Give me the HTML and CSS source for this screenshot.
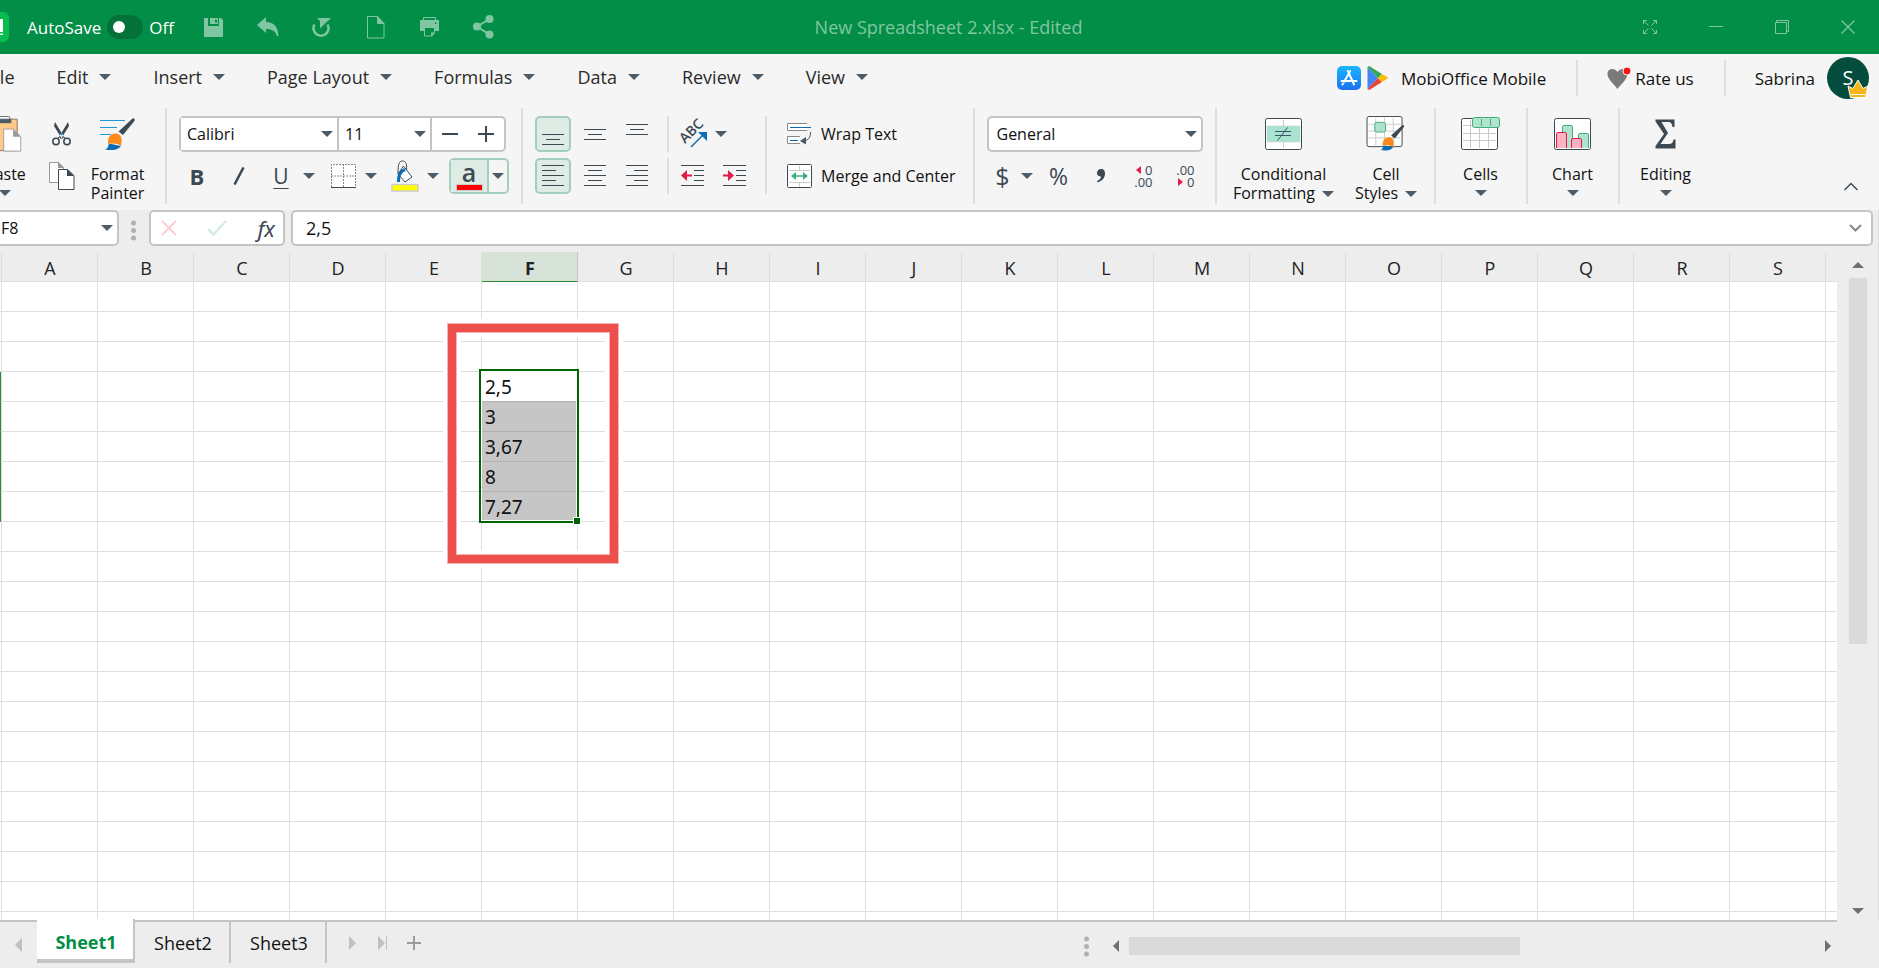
FILE: index.html
```html
<!DOCTYPE html>
<html lang="en">

<head>
    <meta charset="utf-8">
    <title>New Spreadsheet 2.xlsx - Edited</title>
    <link rel="stylesheet" href="styles.css">
</head>

<body>
    <svg class="defs" aria-hidden="true">
        <symbol id="caret" viewBox="0 0 12 6"><path d="M0 0h12L6 6z" /></symbol>
        <symbol id="brush" viewBox="0 0 30 34">
            <path d="M29 0.5c1 1 .8 1.800 0 3L18 17l-4.500-3.500L27 1c.8-.7 1.500-.9 2-.5z" fill="#3c4852" />
            <path d="M0 31.500c3.500-1 3-3.500 4-6L16 28c-2 3-6 5-16 3.500z" fill="#0a6cb5" />
            <path d="M3 26c-.5-6 2-10.500 7.500-10.500 5 0 7.500 4 5.500 12.500-3-2.500-9-3-13-2z" fill="#ff8a1c" />
        </symbol>
    </svg>

    <!-- TITLE BAR -->
    <header class="titlebar">
        <div class="title-left">
            <svg class="app-logo" width="30" height="30" viewBox="0 0 30 30"><rect width="30" height="30" rx="6" fill="#07bd4f" /><path fill="#fff" d="M6 7h18v13H6zM6 21.500h18V23H6z" /><path fill="#07bd4f" d="M9 10h11v7H9z" /></svg>
            <label class="autosave"><span>AutoSave</span><input type="checkbox" class="switch"><span>Off</span></label>
            <button class="title-btn" aria-label="Save"><svg width="19" height="19" viewBox="0 0 19 19"><path fill="currentColor" fill-rule="evenodd" d="M0 0h4v8h11V0h2l2 2v17H0zM6 0h8v6H6zM11 1.500h2v3h-2z" /></svg></button>
            <button class="title-btn" aria-label="Undo"><svg width="22" height="20" viewBox="0 0 22 20"><path fill="currentColor" d="M0 8L9 0v5c8 0 12 5 12.500 14h-1.500c-1.500-5-5-7-11-7v4z" /></svg></button>
            <button class="title-btn" aria-label="Redo"><svg width="20" height="20" viewBox="0 0 20 20"><path fill="none" stroke="currentColor" stroke-width="2.500" d="M2.500 7.500A7.500 7.500 0 1 0 15.500 7.500" /><path fill="currentColor" d="M5 1h14l-2.500 2.500-3 2.500L8 11.500V4z" /></svg></button>
            <button class="title-btn" aria-label="New"><svg width="18" height="23" viewBox="0 0 18 23"><path fill="none" stroke="currentColor" d="M.5.5h10l6.500 7v14.500H.5zM10.500.5v7H17" /><path fill="currentColor" d="M10.500.5L17 7.500h-6.500z" /></svg></button>
            <button class="title-btn" aria-label="Print"><svg width="20" height="20" viewBox="0 0 20 20"><path fill="none" stroke="currentColor" d="M3.500 3.500v-3h12v3" /><path fill="currentColor" fill-rule="evenodd" d="M0 3h19v11h-4v-3H4v3H0zM15 5.500h1.500V7H15z" /><path fill="none" stroke="currentColor" d="M4.500 11v8H12l2.500-3v-5" /><path fill="currentColor" d="M11 19v-3.500h4z" /></svg></button>
            <button class="title-btn" aria-label="Share"><svg width="21" height="24" viewBox="0 0 21 24"><path stroke="currentColor" stroke-width="2" fill="none" d="M17 4L4 11.500 17 20" /><g fill="currentColor"><circle cx="16.500" cy="4" r="4" /><circle cx="4" cy="11.500" r="4" /><circle cx="16.500" cy="19.500" r="4" /></g></svg></button>
        </div>
        <h1 class="doc-title">New Spreadsheet 2.xlsx - Edited</h1>
        <div class="title-right">
            <button class="win-btn" aria-label="Full screen"><svg width="14" height="14" viewBox="0 0 14 14"><path fill="none" stroke="currentColor" d="M.5 4V.5H4M.5.5l5 5M10 .5h3.500V4M13.500.5l-5 5M.5 10v3.500H4M.5 13.500l5-5M13.500 10v3.500H10M13.500 13.500l-5-5" /></svg></button>
            <button class="win-btn" aria-label="Minimize"><svg width="14" height="14" viewBox="0 0 14 14"><path stroke="currentColor" d="M0 6.500h14" /></svg></button>
            <button class="win-btn" aria-label="Restore"><svg width="14" height="14" viewBox="0 0 14 14"><path fill="none" stroke="currentColor" d="M.5 2.500h11v11H.5zM1.500 2.500v-2h12v11h-2" /></svg></button>
            <button class="win-btn" aria-label="Close"><svg width="14" height="14" viewBox="0 0 14 14"><path stroke="currentColor" stroke-width="1.300" d="M.5.5l13 13M13.500.5l-13 13" /></svg></button>
        </div>
    </header>

    <!-- MENU -->
    <div class="menubar">
        <nav class="menu">
            <button>File</button>
            <button>Edit <svg class="caret"><use href="#caret" /></svg></button>
            <button>Insert <svg class="caret"><use href="#caret" /></svg></button>
            <button>Page Layout <svg class="caret"><use href="#caret" /></svg></button>
            <button>Formulas <svg class="caret"><use href="#caret" /></svg></button>
            <button>Data <svg class="caret"><use href="#caret" /></svg></button>
            <button>Review <svg class="caret"><use href="#caret" /></svg></button>
            <button>View <svg class="caret"><use href="#caret" /></svg></button>
        </nav>
        <div class="account">
            <a href="#" class="mobile-link">
                <svg width="24" height="24" viewBox="0 0 24 24"><defs><linearGradient id="store" x1="0" y1="0" x2="0" y2="1"><stop offset="0" stop-color="#1ab8fb" /><stop offset="1" stop-color="#1d70f2" /></linearGradient></defs><rect width="24" height="24" rx="5" fill="url(#store)" /><path fill="none" stroke="#fff" stroke-width="2" stroke-linecap="round" d="M13.200 5L7 16M10.800 5L17 18.500M4.500 15h9M16.500 15h3M5.500 18.500l.3-.6" /></svg>
                <svg width="22" height="24" viewBox="0 0 22 24"><path fill="#4285f4" d="M.5 1v22L11 12z" /><path fill="#34a853" d="M.5 1C1 0 2 0 3 .5l12 7.500-4 4z" /><path fill="#ea4335" d="M.5 23c.5 1 1.500 1 2.500.5L15 16l-4-4z" /><path fill="#fbbc04" d="M15 8l5 3c1 .6 1 1.400 0 2l-5 3-4-4z" /></svg>
                <span>MobiOffice Mobile</span>
            </a>
            <a href="#" class="rate-link">
                <svg width="24" height="24" viewBox="0 0 24 24"><path fill="#7a7a7a" d="M10.500 23C6 17 .5 13 .5 8 .5 2 7.500 1.500 10.500 6c3-4.500 10-4 10 2 0 5-5.500 9-10 15z" /><circle cx="20" cy="5" r="4" fill="#f11" stroke="#f4f4f4" /></svg>
                <span>Rate us</span>
            </a>
            <a href="#" class="user-link">
                <span>Sabrina</span>
                <span class="avatar">S<svg class="crown" width="22" height="19" viewBox="0 0 22 19"><path fill="#f5b515" stroke="#fff" d="M3.500 18.500L1 7l5 2.500L11 1l5 8.500L21 7l-2.500 11.500z" /><path stroke="#fff" d="M4 15.500h14" /></svg></span>
            </a>
        </div>
    </div>

    <!-- RIBBON -->
    <div class="ribbon">
        <div class="group clipboard">
            <button class="big paste">
                <svg width="44" height="40" viewBox="0 0 44 40"><path fill="#ffc98a" stroke="#8a6a45" d="M.5 3.500h35v35H.5z" /><path fill="#4d5b67" d="M9 3h20v5H9z" /><rect x="13" y=".5" width="14" height="3" rx="1" fill="#fff" stroke="#4d5b67" /><path fill="#fff" stroke="#999" d="M20.500 14.500h11l8 8.500v16h-19z" /><path fill="#999" d="M31 14.500v8.500h8.500z" /></svg>
                <span>Paste</span><svg class="caret"><use href="#caret" /></svg>
            </button>
            <div class="rows">
                <button class="tool" aria-label="Cut"><svg width="19" height="24" viewBox="0 0 19 24"><path fill="#3c4852" d="M3 0l9 15-2 2L2 4zM16 0L7 15l2 2 8-13z" /><circle cx="9.500" cy="12" r="1.200" fill="#1c9ad6" /><path stroke="#3c4852" d="M7 15l-1.500 2M12 15l1.500 2" /><circle cx="4" cy="19.500" r="3.200" fill="none" stroke="#3c4852" stroke-width="1.500" /><circle cx="15" cy="19.500" r="3.200" fill="none" stroke="#3c4852" stroke-width="1.500" /></svg></button>
                <button class="tool" aria-label="Copy"><svg width="28" height="30" viewBox="0 0 28 30"><path fill="#fff" stroke="#999" d="M1.500 1.500h9l5 5v15h-14z" /><path fill="#999" d="M10 1v6h6z" /><path fill="#fff" stroke="#3c4852" d="M10.500 8.500h9l6.500 6v14h-15.500z" /><path fill="#3c4852" d="M19 8v7h7z" /></svg></button>
            </div>
            <button class="big"><svg width="38" height="36" viewBox="0 0 38 36"><path stroke="#1c9ad6" stroke-width="1.200" d="M1 4.500h25M1 11.500h17M1 18.500h11" /><use href="#brush" x="6" y="2" width="30" height="34" /></svg><span>Format</span><span>Painter</span></button>
        </div>

        <div class="group rows fonts">
            <div class="font-box">
                <select class="font-name" aria-label="Font"><option>Calibri</option></select>
                <select class="font-size" aria-label="Font size"><option>11</option></select>
                <button aria-label="Decrease size"><svg width="16" height="16" viewBox="0 0 16 16"><path stroke="#3c4852" stroke-width="2" d="M0 8h16" /></svg></button>
                <button aria-label="Increase size"><svg width="16" height="16" viewBox="0 0 16 16"><path stroke="#3c4852" stroke-width="2" d="M0 8h16M8 0v16" /></svg></button>
            </div>
            <div class="line">
                <button class="tool bold">B</button>
                <button class="tool" aria-label="Italic"><svg width="12" height="18" viewBox="0 0 12 18"><path stroke="#3c4852" stroke-width="2.500" d="M1.500 17.500l9-17" /></svg></button>
                <button class="split"><span class="icon underline">U</span><svg class="caret"><use href="#caret" /></svg></button>
                <button class="split" aria-label="Borders"><span class="icon"><svg width="25" height="24" viewBox="0 0 25 24"><rect x=".5" y=".5" width="24" height="23" fill="#fff" /><path fill="none" stroke="#888" stroke-dasharray="2 1" d="M.5 23V.5h24V23M12.500 0v23M0 12h25" /><path stroke="#3c4852" d="M0 23.500h25" /></svg></span><svg class="caret"><use href="#caret" /></svg></button>
                <button class="split" aria-label="Fill color"><span class="icon"><svg width="28" height="32" viewBox="0 0 28 32"><path fill="#fff" stroke="#3c4852" d="M12.500 6l8.500 11-7 5-7-8z" /><path fill="none" stroke="#3c4852" d="M7 14C7 4 8 1 11.500 1S16 4 15.500 10" /><path fill="none" stroke="#0a6cb5" stroke-width="3" d="M14 9.500c-5 2-7 6-6.500 12.500" /><path fill="#ff0" stroke="#ccc" stroke-width="1.500" d="M1 24.500h26v6.500H1z" /></svg></span><svg class="caret"><use href="#caret" /></svg></button>
                <button class="split font-color" aria-label="Font color"><span class="icon"><b>a</b><i></i></span><svg class="caret"><use href="#caret" /></svg></button>
            </div>
        </div>

        <div class="group align">
            <div class="rows">
                <div class="line">
                    <button class="tool on" aria-label="Bottom align"><svg width="22" height="32" viewBox="0 0 22 32"><path d="M0 16.500h22M4 21.500h14M0 26.500h22" /></svg></button>
                    <button class="tool" aria-label="Middle align"><svg width="22" height="32" viewBox="0 0 22 32"><path d="M0 11.500h22M4 16.500h14M0 21.500h22" /></svg></button>
                    <button class="tool" aria-label="Top align"><svg width="22" height="32" viewBox="0 0 22 32"><path d="M0 6.500h22M4 11.500h14M0 16.500h22" /></svg></button>
                </div>
                <div class="line">
                    <button class="tool on" aria-label="Align left"><svg width="22" height="22" viewBox="0 0 22 22"><path d="M0 .5h22M0 5.500h14M0 10.500h22M0 15.500h14M0 20.500h22" /></svg></button>
                    <button class="tool" aria-label="Center"><svg width="22" height="22" viewBox="0 0 22 22"><path d="M0 .5h22M4 5.500h14M0 10.500h22M4 15.500h14M0 20.500h22" /></svg></button>
                    <button class="tool" aria-label="Align right"><svg width="22" height="22" viewBox="0 0 22 22"><path d="M0 .5h22M8 5.500h14M0 10.500h22M8 15.500h14M0 20.500h22" /></svg></button>
                </div>
            </div>
            <div class="rows indent">
                <div class="line">
                    <button class="split" aria-label="Orientation"><span class="icon"><svg width="32" height="32" viewBox="0 0 32 32"><text transform="translate(8 26) rotate(-45)" class="abc">ABC</text><path stroke="#0a6cb5" stroke-width="1.500" d="M14 29l12-12" /><path fill="#0a6cb5" d="M21 14h9v9z" /></svg></span><svg class="caret"><use href="#caret" /></svg></button>
                </div>
                <div class="line">
                    <button class="tool" aria-label="Decrease indent"><svg width="24" height="22" viewBox="0 0 24 22"><path d="M0 .5h23M13 5.500h10M13 10.500h10M13 15.500h10M0 20.500h23" /><path class="red" d="M0 10.500L6 5v4.500h5v2H6V16z" /></svg></button>
                    <button class="tool" aria-label="Increase indent"><svg width="24" height="22" viewBox="0 0 24 22"><path d="M0 .5h23M13 5.500h10M13 10.500h10M13 15.500h10M0 20.500h23" /><path class="red" d="M11 10.500L5 5v4.500H0v2h5V16z" /></svg></button>
                </div>
            </div>
            <div class="rows wrap">
                <button class="labelled"><span class="icon"><svg width="26" height="24" viewBox="0 0 26 24"><path fill="#fff" stroke="#888" d="M21 1.500H1.500v7H21M14 14.500H1.500v7H14" /><path stroke="#0a6cb5" stroke-width="1.200" d="M4 5.500h21M4 18.500h8" /><path fill="none" stroke="#3f566b" d="M24.500 10c0 6-2 8-7 9" /><path fill="#3f566b" d="M14 19l6-4v7.500z" /></svg></span>Wrap Text</button>
                <button class="labelled"><span class="icon"><svg width="25" height="24" viewBox="0 0 25 24"><rect x=".5" y=".5" width="24" height="23" rx="1" fill="#fff" stroke="#3c4852" /><path stroke="#ccc" d="M2 6.500h21M2 18.500h21M12.500 2v5M12.500 18v5" /><path fill="#3fae7a" d="M4 12l5-4v3.300h7V8l5 4-5 4v-3.300H9V16z" /></svg></span>Merge and Center</button>
            </div>
        </div>

        <div class="group rows number">
            <select class="format" aria-label="Number format"><option>General</option></select>
            <div class="line">
                <button class="split money"><span class="icon">$</span><svg class="caret"><use href="#caret" /></svg></button>
                <button class="tool percent">%</button>
                <button class="tool" aria-label="Comma style"><svg width="10" height="14" viewBox="0 0 10 14"><path fill="#3c4852" d="M5 0c3 0 4 2 4 4.500C9 9 6 12 1.500 13.500L1 12c3-1.500 4-3 4-4.500C2.500 7.500 1 6 1 4s1.500-4 4-4z" /></svg></button>
                <button class="tool decimals"><span><svg width="5" height="8" viewBox="0 0 5 8"><path class="red" d="M5 0v8L0 4z" /></svg>0</span><span>.00</span></button>
                <button class="tool decimals"><span>.00</span><span><svg width="5" height="8" viewBox="0 0 5 8"><path class="red" d="M0 0v8l5-4z" /></svg>0</span></button>
            </div>
        </div>

        <div class="group styles">
            <button class="big wide"><svg width="38" height="32" viewBox="0 0 38 32"><rect x=".5" y=".5" width="36" height="31" rx="2" fill="#fff" stroke="#3c4852" /><path stroke="#ccc" d="M18.500 2v28" /><path fill="#a9e4d0" stroke="#c8c8c8" stroke-width=".5" d="M2 8h33v16H2z" /><path stroke="#3f566b" d="M10 13.500h16M10 17.500h16M12.500 22.500l10-13" /></svg><span>Conditional</span><span>Formatting <svg class="caret"><use href="#caret" /></svg></span></button>
            <button class="big narrow"><svg width="41" height="37" viewBox="0 0 41 37"><rect x=".5" y=".5" width="36" height="31" rx="2" fill="#fff" stroke="#3c4852" /><path stroke="#ccc" d="M9.500 2v28M18.500 2v28M27.500 2v28M2 8.500h33M2 15.500h33M2 22.500h33" /><rect x="8.500" y="6.500" width="11" height="10" rx="2" fill="#b0e3ce" stroke="#3fae7a" /><use href="#brush" x="13" y="9" width="27" height="28" /></svg><span>Cell</span><span>Styles <svg class="caret"><use href="#caret" /></svg></span></button>
        </div>
        <div class="group single">
            <button class="big"><svg width="40" height="34" viewBox="0 0 40 34"><rect x=".5" y="1.500" width="36" height="31" rx="2" fill="#fff" stroke="#3c4852" /><path stroke="#ccc" d="M9.500 3v28M18.500 3v28M27.500 3v28M2 8.500h33M2 16.500h33M2 23.500h33" /><rect x="11.500" y=".5" width="27" height="10" rx="2" fill="#b0e3ce" stroke="#3fae7a" /><path stroke="#3fae7a" d="M20.500 2v7M29.500 2v7" /></svg><span>Cells</span><svg class="caret"><use href="#caret" /></svg></button>
        </div>
        <div class="group single">
            <button class="big"><svg width="38" height="32" viewBox="0 0 38 32"><rect x=".5" y=".5" width="36" height="31" rx="2" fill="#fff" stroke="#3c4852" /><path fill="#b0e3ce" stroke="#3fae7a" d="M8.500 30V9q0-1.500 1.500-1.500h7q1.500 0 1.500 1.500v21M24.500 30V17q0-1.500 1.500-1.500h7q1.500 0 1.500 1.500v13" /><path fill="#ffb3c0" stroke="#e6194b" d="M2.500 30V16q0-1.500 1.500-1.500h7q1.500 0 1.500 1.500v14M17.500 30v-8q0-1.500 1.500-1.500h7q1.500 0 1.500 1.500v8" /></svg><span>Chart</span><svg class="caret"><use href="#caret" /></svg></button>
        </div>
        <div class="group single last">
            <button class="big"><svg width="21" height="30" viewBox="0 0 21 30"><path fill="#3c4852" d="M.5.500h19V8h-2C17 4.500 16 3 13 3H6.500L13 14 5.500 25H14c3 0 4-1.500 4.500-4.500h2V29.500H.5V27L9 15 .5 2.500z" /></svg><span>Editing</span><svg class="caret"><use href="#caret" /></svg></button>
        </div>
        <button class="collapse" aria-label="Collapse ribbon"><svg width="14" height="9" viewBox="0 0 14 9"><path fill="none" stroke="#3c4852" stroke-width="1.500" d="M.5 8L7 1.500 13.500 8" /></svg></button>
    </div>

    <!-- FORMULA BAR -->
    <div class="formula-bar">
        <div class="box name-box"><input type="text" value="F8" aria-label="Name box"><button aria-label="Names"><svg class="caret"><use href="#caret" /></svg></button></div>
        <svg class="dots" width="5" height="21" viewBox="0 0 5 21"><circle cx="2.500" cy="3" r="2.500" /><circle cx="2.500" cy="10.500" r="2.500" /><circle cx="2.500" cy="18" r="2.500" /></svg>
        <div class="box fx-box">
            <button aria-label="Cancel"><svg width="16" height="16" viewBox="0 0 16 16"><path stroke="#fbcdd5" stroke-width="2" d="M1 1l14 14M15 1L1 15" /></svg></button>
            <button aria-label="Enter"><svg width="20" height="16" viewBox="0 0 20 16"><path fill="none" stroke="#d5ece1" stroke-width="2.500" d="M1 9l5.500 5.500L19 1" /></svg></button>
            <button class="fx">fx</button>
        </div>
        <div class="box value-box"><input type="text" value="2,5" aria-label="Formula"><button aria-label="Expand"><svg width="13" height="8" viewBox="0 0 13 8"><path fill="none" stroke="#888" stroke-width="2" d="M1 1l5.500 5.500L12 1" /></svg></button></div>
    </div>

    <!-- SHEET -->
    <main class="sheet">
        <div class="grid">
            <table id="cells"></table>
            <div class="selection"><span class="handle"></span></div>
            <div class="marker"></div>
        </div>
        <div class="vscroll">
            <button aria-label="Scroll up"><svg width="12" height="6" viewBox="0 0 12 6"><path d="M0 6h12L6 0z" /></svg></button>
            <div class="track"><div class="thumb"></div></div>
            <button aria-label="Scroll down"><svg width="12" height="6" viewBox="0 0 12 6"><path d="M0 0h12L6 6z" /></svg></button>
        </div>
    </main>

    <!-- SHEET TABS -->
    <footer class="tabbar">
        <button class="nav first" aria-label="Previous sheet"><svg width="7" height="14" viewBox="0 0 7 14"><path d="M7 0v14L0 7z" /></svg></button>
        <button class="tab active">Sheet1</button>
        <button class="tab">Sheet2</button>
        <button class="tab">Sheet3</button>
        <button class="nav" aria-label="Next sheet"><svg width="7" height="14" viewBox="0 0 7 14"><path d="M0 0v14l7-7z" /></svg></button>
        <button class="nav" aria-label="Last sheet"><svg width="9" height="14" viewBox="0 0 9 14"><path d="M0 0v14l7-7zM8 0h1v14H8z" /></svg></button>
        <button class="nav" aria-label="Add sheet"><svg width="14" height="14" viewBox="0 0 14 14"><path stroke="#999" stroke-width="2" d="M0 7h14M7 0v14" /></svg></button>
        <div class="hscroll">
            <svg class="dots" width="5" height="21" viewBox="0 0 5 21"><circle cx="2.500" cy="3" r="2.500" /><circle cx="2.500" cy="10.500" r="2.500" /><circle cx="2.500" cy="18" r="2.500" /></svg>
            <button aria-label="Scroll left"><svg width="6" height="12" viewBox="0 0 6 12"><path d="M6 0v12L0 6z" /></svg></button>
            <div class="track"><div class="thumb"></div></div>
            <button aria-label="Scroll right"><svg width="6" height="12" viewBox="0 0 6 12"><path d="M0 0v12l6-6z" /></svg></button>
        </div>
    </footer>

    <script src="grid.js"></script>
</body>

</html>
```

FILE: styles.css
```css
* {
    box-sizing: border-box;
}

body {
    margin: 0;
    height: 100vh;
    display: flex;
    flex-direction: column;
    overflow: hidden;
    background-color: #ededed;
    color: #111;
    font-family: "Open Sans", "Noto Sans", sans-serif;
    font-size: 16px;
}

button, input, select {
    margin: 0;
    padding: 0;
    border: 0;
    background: none;
    color: inherit;
    font: inherit;
}

button {
    display: flex;
    align-items: center;
    justify-content: center;
}

a {
    color: inherit;
    text-decoration: none;
}

svg {
    display: block;
    flex: none;
}

.defs {
    position: absolute;
    width: 0;
    height: 0;
}

.caret {
    width: 12px;
    height: 6px;
    fill: #4d5b67;
}

/* TITLE BAR */
.titlebar {
    height: 54px;
    flex: none;
    display: grid;
    grid-template-columns: 1fr auto 1fr;
    align-items: center;
    padding-left: 18px;
    background-color: #028e46;
    color: #81c6a2;
}

.title-left, .title-right {
    display: flex;
    align-items: center;
}

.title-right {
    justify-content: flex-end;
    gap: 36px;
    padding-right: 16px;
}

.app-logo {
    margin-left: -39px;
    margin-right: 18px;
}

.autosave {
    display: flex;
    align-items: center;
    gap: 6px;
    margin-right: 13px;
    color: #fff;
    font-size: 17px;
}

.switch {
    appearance: none;
    display: flex;
    align-items: center;
    width: 36px;
    height: 24px;
    padding-left: 6px;
    border-radius: 12px;
    background-color: #04713a;
}

.switch::before {
    content: "";
    width: 12px;
    height: 12px;
    border-radius: 50%;
    background-color: #fff;
}

.title-btn {
    width: 54px;
    height: 54px;
}

.win-btn {
    width: 30px;
    height: 54px;
}

.doc-title {
    margin: 0;
    font-size: 18px;
    font-weight: normal;
}

/* MENU */
.menubar {
    height: 48px;
    flex: none;
    display: flex;
    justify-content: space-between;
    background-color: #f5f5f5;
}

.menu {
    display: flex;
    margin-left: -35px;
    padding-bottom: 2px;
    font-size: 18px;
    color: #2b2b2b;
}

.menu button {
    gap: 11px;
    padding: 0 21px;
}

.account {
    display: flex;
    align-items: center;
    padding-right: 10px;
    font-size: 17px;
}

.account a {
    display: flex;
    align-items: center;
    height: 36px;
    gap: 6px;
}

.account .rate-link {
    gap: 4px;
}

.mobile-link span {
    margin-left: 6px;
}

.mobile-link, .rate-link {
    padding-right: 30px;
    border-right: 2px solid #dedede;
}

.rate-link, .user-link {
    padding-left: 29px;
}

.account .user-link {
    gap: 12px;
}

.avatar {
    position: relative;
    width: 42px;
    height: 42px;
    border-radius: 50%;
    background-color: #044d3d;
    color: #fff;
    font-size: 20px;
    line-height: 42px;
    text-align: center;
}

.crown {
    position: absolute;
    right: 0;
    bottom: 1px;
}

/* RIBBON */
.ribbon {
    height: 108px;
    flex: none;
    display: flex;
    padding: 6px 0;
    background-color: #f5f5f5;
}

.group {
    display: flex;
    padding: 8px 12px 0;
    border-right: 2px solid #dedede;
}

.group.last {
    border-right: 0;
}

.rows {
    display: flex;
    flex-direction: column;
    gap: 6px;
}

.line {
    display: flex;
    gap: 6px;
}

.tool {
    width: 36px;
    height: 36px;
    color: #3c4852;
}

.split {
    height: 36px;
    color: #3c4852;
}

.icon {
    width: 36px;
    display: flex;
    align-items: center;
    justify-content: center;
}

.split .caret {
    margin: 0 4px;
}

.big {
    flex-direction: column;
    justify-content: flex-start;
    line-height: 19px;
    width: 72px;
}

.big > svg:first-child {
    height: 36px;
    margin-bottom: 13px;
}

.big > .caret {
    margin-top: 6px;
}

.big span {
    display: flex;
    align-items: center;
    gap: 7px;
}

.clipboard {
    width: 167px;
    padding-left: 0;
}

.clipboard .rows {
    width: 42px;
    align-items: center;
}

.paste {
    margin-left: -30px;
}

.font-box {
    display: flex;
    width: 327px;
    height: 36px;
    border: 2px solid #c4c4c4;
    border-radius: 5px;
    background-color: #fff;
}

.font-box button {
    flex: 1;
}

select {
    appearance: none;
    color: #111;
    background: #fff url("data:image/svg+xml,%3Csvg xmlns='http://www.w3.org/2000/svg' width='12' height='6'%3E%3Cpath fill='%234d5b67' d='M0 0h12L6 6z'/%3E%3C/svg%3E") no-repeat right 4px center;
}

.font-name, .font-size {
    border-right: 2px solid #c4c4c4;
    padding-left: 6px;
}

.font-name {
    width: 158px;
}

.font-size {
    width: 93px;
}

.bold {
    font-weight: bold;
    font-size: 22px;
}

.icon.underline {
    text-decoration: underline;
    text-decoration-thickness: 1px;
    text-underline-offset: 4px;
    font-size: 21px;
}

.font-color {
    border: 2px solid #a5cfbd;
    border-radius: 5px;
}

.font-color .icon {
    flex-direction: column;
    height: 32px;
    border-right: 2px solid #a5cfbd;
    width: 38px;
    background-color: #dfece5;
}

.font-color b {
    font-size: 25px;
    line-height: 22px;
    height: 23px;
    font-weight: 600;
}

.font-color i {
    width: 27px;
    height: 7px;
    border: 1px solid #ccc;
    background-color: #f00;
}

.font-color .caret {
    margin: 0 3px;
}

.on {
    border: 2px solid #a5cfbd;
    border-radius: 5px;
    background-color: #dfece5;
}

.align .tool path {
    stroke: #3c4852;
}

.align .tool .red {
    stroke: none;
}

.red {
    fill: #e6194b;
}

.abc {
    font-size: 14px;
    font-weight: 600;
    fill: #3c4852;
}

.indent {
    margin-left: 12px;
    padding-right: 12px;
    border-right: 2px solid #dedede;
    height: 78px;
}

.indent svg {
    overflow: visible;
}

.indent .line {
    border-left: 2px solid #dedede;
    padding-left: 6px;
}

.wrap {
    margin-left: 14px;
    padding-right: 5px;
    align-items: flex-start;
}

.labelled {
    height: 36px;
    gap: 4px;
}

.format {
    width: 216px;
    height: 36px;
    border: 2px solid #c4c4c4;
    border-radius: 5px;
    padding-left: 8px;
}

.money {
    font-size: 25px;
}

.money .icon {
    width: 32px;
}

.money .caret {
    margin: 0 2px;
}

.percent {
    font-size: 23px;
}

.decimals {
    flex-direction: column;
    align-items: flex-end;
    padding-right: 8px;
    font-size: 13px;
    line-height: 12px;
}

.decimals span {
    display: flex;
    align-items: center;
    gap: 4px;
}

.styles {
    gap: 20px;
    padding-left: 16px;
    padding-right: 16px;
}

.wide {
    width: 102px;
}

.narrow {
    width: 63px;
}

.single {
    width: 92px;
    justify-content: center;
}

.collapse {
    margin-left: auto;
    align-self: flex-end;
    width: 30px;
    height: 36px;
    margin-right: 13px;
}

/* FORMULA BAR */
.formula-bar {
    height: 42px;
    flex: none;
    display: flex;
    align-items: flex-start;
    padding-right: 5px;
    border-right: 1px solid #dcdcdc;
}

.box {
    display: flex;
    height: 36px;
    border: 2px solid #c4c4c4;
    border-radius: 5px;
    background-color: #fff;
}

.box input {
    flex: 1;
    min-width: 0;
    font-size: 18px;
    outline: 0;
}

.name-box {
    width: 131px;
    margin-left: -12px;
}

.name-box input {
    padding-left: 11px;
    font-size: 16px;
}

.name-box button {
    width: 20px;
}

.dots {
    fill: #b0b0b0;
}

.formula-bar .dots {
    margin: 10px 13px 0 12px;
}

.fx-box {
    width: 136px;
    justify-content: space-between;
    padding: 0 8px 0 10px;
}

.fx {
    font-family: "Noto Sans", sans-serif;
    font-style: italic;
    font-size: 22px;
    color: #3c4852;
}

.value-box {
    flex: 1;
    margin-left: 6px;
}

.value-box input {
    padding-left: 13px;
}

.value-box button {
    width: 32px;
}

/* SHEET */
.sheet {
    flex: 1;
    min-height: 0;
    display: flex;
}

.grid {
    position: relative;
    flex: 1;
    overflow: hidden;
    background-color: #fff;
}

table {
    width: 100%;
    table-layout: fixed;
    border-collapse: separate;
    border-spacing: 0;
}

th, td {
    height: 30px;
    padding: 0;
    border-right: 1px solid #dedede;
    border-bottom: 1px solid #dedede;
    white-space: nowrap;
}

th {
    width: 96px;
    padding-top: 3px;
    padding-left: 1px;
    background-color: #ededed;
    font-size: 18px;
    font-weight: normal;
    color: #222;
}

td {
    padding-left: 3px;
    font-size: 19px;
    line-height: 20px;
    font-family: "Noto Sans", sans-serif;
}

.edge {
    width: 2px;
    padding: 0;
}

td.edge.picked {
    border-left: 1px solid #2e8b3a;
    background-color: #fff;
}

.rest {
    width: auto;
    border-right: 0;
}

th.picked {
    background-color: #d8e3d8;
    border-bottom-color: #2e8b3a;
    border-right-color: #c4c4c4;
    font-weight: bold;
}

td.picked {
    background-color: #c6c6c6;
    border-bottom-color: #b0b0b0;
}

td.current {
    background-color: #fff;
}

.selection {
    position: absolute;
    left: 479px;
    top: 117px;
    width: 100px;
    height: 154px;
    border: 2px solid #006400;
    box-shadow: inset 0 0 0 1px #fff;
}

.handle {
    position: absolute;
    right: -4px;
    bottom: -4px;
    width: 8px;
    height: 8px;
    border: 1px solid #fff;
    background-color: #006400;
}

.marker {
    position: absolute;
    left: 448px;
    top: 72px;
    width: 170px;
    height: 239px;
    border: 8px solid #ec4f4c;
    box-shadow: 0 0 0 1px #f7b3b1, 0 0 0 5px #fff, inset 0 0 0 1px #f7b3b1, inset 0 0 0 5px #fff;
}

.vscroll {
    width: 42px;
    display: flex;
    flex-direction: column;
    align-items: center;
    padding-top: 4px;
    border-right: 1px solid #dcdcdc;
    fill: #6f6f6f;
}

.vscroll button {
    width: 18px;
    height: 18px;
}

.vscroll .track {
    flex: 1;
    width: 18px;
    margin: 4px 0;
}

.vscroll .thumb {
    height: 59%;
}

.thumb {
    background-color: #dadada;
}

/* SHEET TABS */
.tabbar {
    height: 48px;
    flex: none;
    display: flex;
    margin-right: 42px;
    border-top: 2px solid #c4c4c4;
}

.tab {
    width: 96px;
    height: 41px;
    border-right: 2px solid #c4c4c4;
    padding-left: 2px;
    font-size: 18px;
}

.tab.active {
    position: relative;
    width: 98px;
    height: 44px;
    margin-top: -3px;
    border-bottom: 4px solid #c4c4c4;
    padding-top: 5px;
    background-color: #fff;
    color: #028e46;
    font-weight: bold;
}

.nav {
    width: 30px;
    height: 42px;
    fill: #c0c0c0;
}

.nav.first {
    width: 37px;
    padding-top: 4px;
}

.tab + .nav {
    margin-left: 10px;
}

.nav:nth-last-child(2) {
    margin-left: 2px;
}

.hscroll {
    width: 41%;
    margin-left: auto;
    height: 42px;
    padding-top: 6px;
    display: flex;
    align-items: center;
    padding-right: 2px;
    fill: #6f6f6f;
}

.hscroll .dots {
    margin-right: 20px;
}

.hscroll button {
    width: 14px;
    height: 18px;
}

.hscroll .track {
    flex: 1;
    height: 18px;
    margin: 0 6px;
}

.hscroll .thumb {
    width: 57%;
    height: 100%;
}
```

FILE: grid.js
```js
var columns = "ABCDEFGHIJKLMNOPQRS".split("");
var rowCount = 40;
var values = { F4: "2,5", F5: "3", F6: "3,67", F7: "8", F8: "7,27" };

function addCell(row, tag, text, className) {
    var cell = document.createElement(tag);
    cell.textContent = text;
    cell.className = className;
    row.appendChild(cell);
}

var table = document.getElementById("cells");

/* COLUMN LETTERS */
var head = table.createTHead().insertRow();
addCell(head, "th", "", "edge");
columns.forEach(function (letter) {
    addCell(head, "th", letter, letter == "F" ? "picked" : "");
});
addCell(head, "th", "", "rest");

/* CELLS */
var body = table.createTBody();
for (var i = 1; i <= rowCount; i++) {
    var row = body.insertRow();
    var picked = i >= 4 && i <= 8;
    addCell(row, "td", "", picked ? "edge picked" : "edge");
    for (var j = 0; j < columns.length; j++) {
        var key = columns[j] + i;
        var className = "";
        if (values[key]) {
            className = i == 4 ? "picked current" : "picked";
        }
        addCell(row, "td", values[key] || "", className);
    }
    addCell(row, "td", "", "rest");
}
```
